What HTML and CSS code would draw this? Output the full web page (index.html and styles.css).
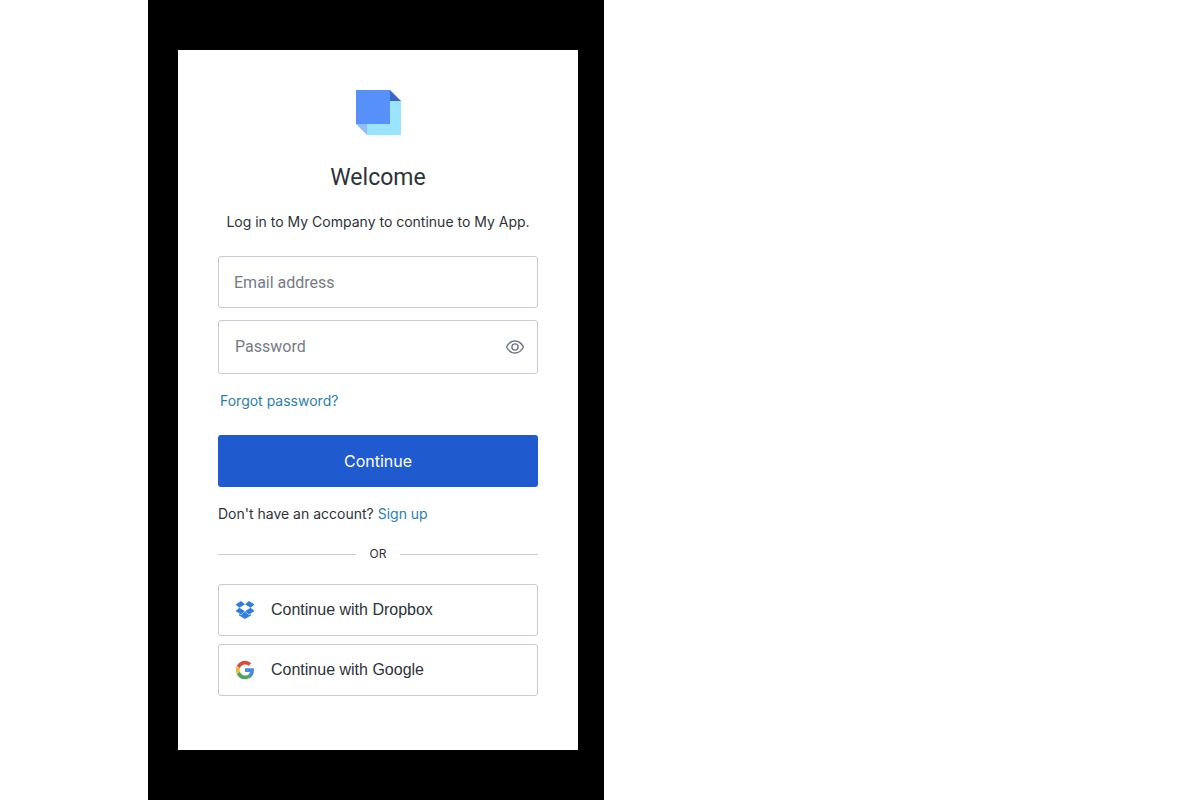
FILE: index.html
```html
<!DOCTYPE html>
<html lang="en">
<head>
<meta charset="utf-8">
<meta name="viewport" content="width=device-width, initial-scale=1">
<title>Welcome</title>
<link rel="stylesheet" href="styles.css">
</head>
<body>
<div class="frame">
  <main class="card">
    <svg class="logo" viewBox="0 0 45 45" aria-hidden="true">
      <path fill="#9be4ff" d="M34 10h11v35H11V34h23z"/>
      <path fill="#3a68c8" d="M34 0l11 11H34z"/>
      <path fill="#8dbcff" d="M0 34h11v11z"/>
      <path fill="#5790f8" d="M0 0h34v34H0z"/>
    </svg>
    <h1 class="title">Welcome</h1>
    <p class="intro">Log in to My Company to continue to My App.</p>
    <form class="form">
      <input class="field" type="email" placeholder="Email address" aria-label="Email address">
      <div class="field password">
        <input class="password-input" type="password" placeholder="Password" aria-label="Password">
        <button class="reveal" type="button" aria-label="Show password">
          <svg class="eye" viewBox="0 0 20 16" fill="none" stroke="#6f7687" stroke-width="1.4" aria-hidden="true">
            <path d="M1.500 8C3.500 4.200 6.500 2 10 2s6.500 2.200 8.500 6c-2 3.800-5 6-8.500 6S3.500 11.800 1.500 8z" stroke-linejoin="round"/>
            <circle cx="10" cy="8" r="3.100"/>
          </svg>
        </button>
      </div>
      <a class="link forgot" href="#">Forgot password?</a>
      <button class="submit" type="submit">Continue</button>
    </form>
    <p class="signup">Don't have an account? <a class="link" href="#">Sign up</a></p>
    <div class="divider">OR</div>
    <div class="providers">
      <button class="provider" type="button">
        <svg class="brand" viewBox="0 0 20 20" fill="#2f7de1" aria-hidden="true">
          <path d="M6 1l4 3.300-5.600 3.500L.500 4.600zM14 1l5.500 3.600-3.900 3.200L10 4.300zM4.400 7.800L10 11.300l-4 3.200L.500 11zM15.600 7.800l3.900 3.200-5.500 3.500-4-3.200z"/>
          <path d="M10 11.800l4 3.300 1.900-1.200v1.500L10 19l-5.900-3.600v-1.500L6 15.100z"/>
        </svg>
        Continue with Dropbox
      </button>
      <button class="provider" type="button">
        <svg class="brand" viewBox="0 0 48 48" aria-hidden="true">
          <path fill="#db4a3d" d="M24 11c3.300 0 6.200 1.100 8.500 3.300l6.300-6.300C34.900 4.400 29.900 2 24 2 15.400 2 8 6.900 4.400 14.100l7.400 5.700C13.500 14.700 18.300 11 24 11z"/>
          <path fill="#4788ec" d="M45.500 24.500c0-1.600-.200-3-.400-4.500H24v9h12.100c-.600 2.900-2.200 5.200-4.600 6.800l7.200 5.600c4.200-3.900 6.800-9.700 6.800-16.900z"/>
          <path fill="#efb93c" d="M11.800 28.200a13.200 13.200 0 0 1 0-8.400l-7.400-5.700a22 22 0 0 0 0 19.800z"/>
          <path fill="#4ca55a" d="M24 46c5.900 0 10.900-2 14.700-5.300l-7.200-5.600c-2 1.300-4.500 2.100-7.500 2.100-5.700 0-10.500-3.900-12.200-9l-7.400 5.700C8 41.100 15.400 46 24 46z"/>
        </svg>
        Continue with Google
      </button>
    </div>
  </main>
</div>
</body>
</html>
```
FILE: styles.css
```css
* {
  box-sizing: border-box;
}

body {
  margin: 0;
  background: #fff;
  color: #2d333a;
  font: 14px/20px Inter, "Liberation Sans", sans-serif;
}

button,
input {
  font: inherit;
  color: inherit;
}

.frame {
  width: fit-content;
  max-width: 100%;
  margin-left: 148px;
  padding: 50px 26px 50px 30px;
  background: #000;
}

.card {
  display: flex;
  flex-direction: column;
  width: 400px;
  max-width: 100%;
  padding: 40px 40px 54px;
  background: #fff;
}

.logo {
  width: 45px;
  height: 45px;
  align-self: center;
}

.title {
  margin: 27px 0 18px;
  font-family: Roboto, sans-serif;
  font-size: 23px;
  line-height: 32px;
  font-weight: 400;
  text-align: center;
}

.intro {
  margin: 0 0 24px;
  text-align: center;
}

.form {
  display: flex;
  flex-direction: column;
}

.field {
  width: 100%;
  height: 52px;
  padding: 0 15px;
  border: 1px solid #c9cad5;
  border-radius: 3px;
  background: #fff;
  font-family: Roboto, sans-serif;
  font-size: 16px;
}

.password {
  display: flex;
  align-items: center;
  height: 54px;
  margin-top: 12px;
  padding: 0 12px 0 16px;
}

.password-input {
  flex: 1;
  min-width: 0;
  padding: 0;
  border: 0;
  background: none;
}

.field::placeholder,
.password-input::placeholder {
  color: #757b83;
  opacity: 1;
}

.reveal {
  display: flex;
  padding: 0;
  border: 0;
  background: none;
}

.eye {
  width: 20px;
  height: 16px;
}

.link {
  color: #2a7fab;
  text-decoration: none;
}

.forgot {
  align-self: flex-start;
  margin: 17px 0 24px 2px;
}

.submit {
  height: 52px;
  border: 0;
  border-radius: 3px;
  background: #1f5bce;
  color: #fff;
  font-size: 16px;
}

.signup {
  margin: 17px 0 20px;
}

.divider {
  display: flex;
  align-items: center;
  gap: 14px;
  font-size: 12px;
}

.divider::before,
.divider::after {
  content: "";
  flex: 1;
  border-top: 1px solid #c9cad5;
}

.providers {
  display: grid;
  gap: 8px;
  margin-top: 20px;
}

.provider {
  display: flex;
  align-items: center;
  gap: 16px;
  height: 52px;
  padding: 0 16px;
  border: 1px solid #c9cad5;
  border-radius: 3px;
  background: #fff;
  font-family: "Liberation Sans", Arial, sans-serif;
  font-size: 16px;
}

.brand {
  width: 20px;
  height: 20px;
}
```
